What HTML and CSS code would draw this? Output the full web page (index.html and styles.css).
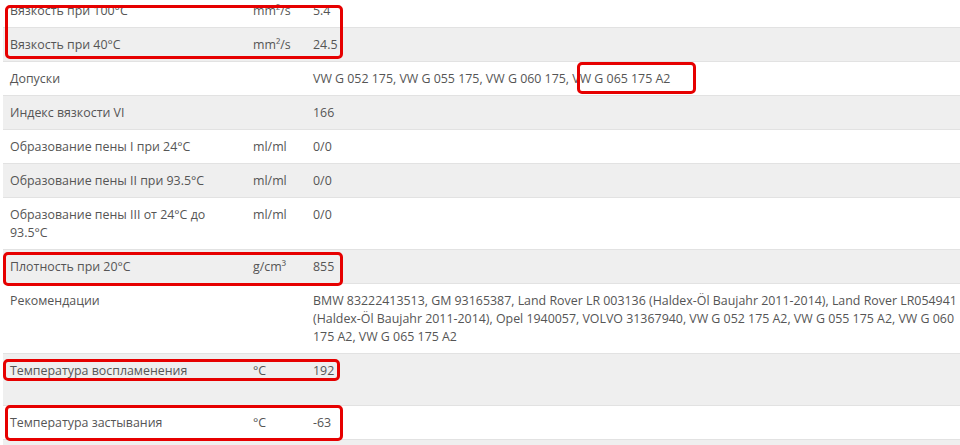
FILE: index.html
```html
<!DOCTYPE html>
<html lang="ru">
<head>
<meta charset="utf-8">
<title>Характеристики</title>
<link rel="stylesheet" href="styles.css">
</head>
<body>
<div class="sheet">
  <table class="specs">
    <colgroup>
      <col class="c-name">
      <col class="c-unit">
      <col class="c-val">
    </colgroup>
    <tbody>
      <tr><td>Вязкость при 100°C</td><td>mm²/s</td><td>5.4</td></tr>
      <tr><td>Вязкость при 40°C</td><td>mm²/s</td><td>24.5</td></tr>
      <tr><td>Допуски</td><td></td><td>VW G 052 175, VW G 055 175, VW G 060 175, VW G 065 175 A2</td></tr>
      <tr><td>Индекс вязкости VI</td><td></td><td>166</td></tr>
      <tr><td>Образование пены I при 24°C</td><td>ml/ml</td><td>0/0</td></tr>
      <tr><td>Образование пены II при 93.5°C</td><td>ml/ml</td><td>0/0</td></tr>
      <tr><td>Образование пены III от 24°C до 93.5°C</td><td>ml/ml</td><td>0/0</td></tr>
      <tr><td>Плотность при 20°C</td><td>g/cm³</td><td>855</td></tr>
      <tr><td>Рекомендации</td><td></td><td>BMW 83222413513, GM 93165387, Land Rover LR 003136 (Haldex-Öl Baujahr 2011-2014), Land Rover LR054941 (Haldex-Öl Baujahr 2011-2014), Opel 1940057, VOLVO 31367940, VW G 052 175 A2, VW G 055 175 A2, VW G 060 175 A2, VW G 065 175 A2</td></tr>
      <tr class="tall"><td>Температура воспламенения</td><td>°C</td><td>192</td></tr>
      <tr><td>Температура застывания</td><td>°C</td><td>-63</td></tr>
      <tr><td>&nbsp;</td><td></td><td></td></tr>
    </tbody>
  </table>

  <div class="mark mark-visc"></div>
  <div class="mark mark-approval"></div>
  <div class="mark mark-density"></div>
  <div class="mark mark-flash"></div>
  <div class="mark mark-pour"></div>
</div>
</body>
</html>
```

FILE: styles.css
```css
html, body {
  margin: 0;
  padding: 0;
  background: #ffffff;
  overflow: hidden;
}

body {
  font-family: "Open Sans", "Noto Sans", "Liberation Sans", sans-serif;
  font-size: 12.4px;
  color: #555555;
}

.sheet {
  position: relative;
  width: 1000px;
  margin-top: -7px;
  padding-left: 3px;
}

.specs {
  border-collapse: collapse;
  table-layout: fixed;
  width: 976px;
}

.c-name { width: 243px; }
.c-unit { width: 60px; }
.c-val  { width: 673px; }

.specs td {
  padding: 8px 7px 7px 7px;
  line-height: 18px;
  vertical-align: top;
  border-top: 1px solid #e2e2e2;
}

.specs tr:nth-child(even) td {
  background: #efefef;
}

.specs tr.tall td {
  height: 36px;
}

.mark {
  position: absolute;
  border: 3px solid #e60000;
  border-radius: 5px;
  box-sizing: border-box;
}

.mark-visc     { left: 5px;   top: 12px;  width: 338px; height: 54px; }
.mark-approval { left: 577px; top: 69px;  width: 119px; height: 32px; }
.mark-density  { left: 3px;   top: 259px; width: 340px; height: 34px; }
.mark-flash    { left: 3px;   top: 366px; width: 337px; height: 22px; }
.mark-pour     { left: 5px;   top: 412px; width: 338px; height: 36px; }
```
